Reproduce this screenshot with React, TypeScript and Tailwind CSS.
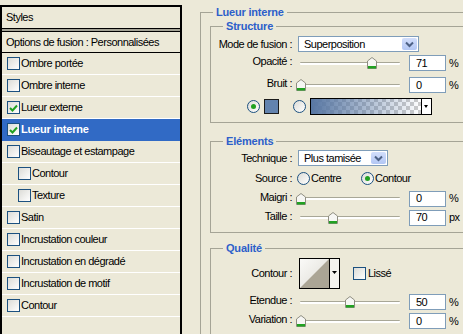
import React from "react";

const Check = () => (
  <svg width="9" height="8" viewBox="0 0 9 8">
    <path d="M1 4 L3.5 6.5 L8 1.5" fill="none" stroke="#21a121" strokeWidth="2" />
  </svg>
);

const Checkbox = ({ checked = false }: { checked?: boolean }) => (
  <span className="flex h-[13px] w-[13px] shrink-0 items-center justify-center border border-[#1c5180] bg-linear-to-br from-[#dcdcd7] to-white">
    {checked && <Check />}
  </span>
);

const Radio = ({ checked = false }: { checked?: boolean }) => (
  <span className="flex h-[13px] w-[13px] shrink-0 items-center justify-center rounded-full border border-[#1c5180] bg-linear-to-br from-[#dcdcd7] to-white">
    {checked && <span className="h-[5px] w-[5px] rounded-full bg-[#21a121]" />}
  </span>
);

const Thumb = () => (
  <svg width="10" height="12" viewBox="0 0 10 12">
    <path d="M0.5 4 L5 0.5 L9.5 4 V11.5 H0.5 Z" fill="#f6f6f3" stroke="#8f8e82" />
    <rect x="1" y="9" width="8" height="2.5" fill="#21a121" />
  </svg>
);

const Slider = ({ pos }: { pos: number }) => (
  <div className="relative ml-[2px] flex h-[14px] w-[100px] items-center">
    <div className="h-[3px] w-full rounded-[1px] border-t border-[#a8a797] bg-white" />
    <div className="absolute top-[1px]" style={{ left: pos - 5 }}>
      <Thumb />
    </div>
  </div>
);

const Field = ({ value, unit }: { value: string; unit: string }) => (
  <>
    <div className="ml-[9px] flex h-[16px] w-[37px] items-center border border-[#7f9db9] bg-white pl-[6px]">
      {value}
    </div>
    <span className="ml-[3px]">{unit}</span>
  </>
);

const Select = ({ value, width }: { value: string; width: string }) => (
  <div className={`flex h-[16px] items-center justify-between border border-[#7f9db9] bg-white pl-[5px] ${width}`}>
    <span>{value}</span>
    <span className="mr-[1px] flex h-[12px] w-[15px] items-center justify-center rounded-[2px] bg-linear-to-b from-[#d2defb] to-[#b3c7f4]">
      <svg width="9" height="7" viewBox="0 0 9 7">
        <path d="M1 1.5 L4.5 5 L8 1.5" fill="none" stroke="#4d6185" strokeWidth="2" />
      </svg>
    </span>
  </div>
);

const Label = ({ children, lift = false }: { children: React.ReactNode; lift?: boolean }) => (
  <span className={`w-[82px] shrink-0 pr-px text-right ${lift ? "pb-[3px]" : ""}`}>{children}</span>
);

const SliderRow = ({ label, pos, value, unit, h }: { label: string; pos: number; value: string; unit: string; h: string }) => (
  <div className={`flex items-center gap-[5px] ${h}`}>
    <Label lift>{label}</Label>
    <div className="flex items-center">
      <Slider pos={pos} />
      <Field value={value} unit={unit} />
    </div>
  </div>
);

const GradientSwatch = () => (
  <svg width="122" height="17" viewBox="0 0 122 17">
    <defs>
      <pattern id="chk" width="8" height="8" patternUnits="userSpaceOnUse">
        <rect width="8" height="8" fill="#ffffff" />
        <rect width="4" height="4" fill="#cccccc" />
        <rect x="4" y="4" width="4" height="4" fill="#cccccc" />
      </pattern>
      <linearGradient id="fade" x1="0" x2="1" y1="0" y2="0">
        <stop offset="0" stopColor="#5877a3" stopOpacity="1" />
        <stop offset="1" stopColor="#5877a3" stopOpacity="0" />
      </linearGradient>
    </defs>
    <rect x="1" y="1" width="110" height="15" fill="url(#chk)" />
    <rect x="1" y="1" width="110" height="15" fill="url(#fade)" />
    <rect x="111" y="1" width="10" height="15" fill="#ffffff" />
    <line x1="111.5" y1="1" x2="111.5" y2="16" stroke="#000" />
    <path d="M114 7 L118 7 L116 10 Z" fill="#000" />
    <rect x="0.5" y="0.5" width="121" height="16" fill="none" stroke="#000" />
  </svg>
);

const ContourPicker = () => (
  <svg width="41" height="31" viewBox="0 0 41 31">
    <defs>
      <linearGradient id="cbg" x1="0" x2="1" y1="0" y2="1">
        <stop offset="0" stopColor="#fafaf8" />
        <stop offset="1" stopColor="#dedcd4" />
      </linearGradient>
    </defs>
    <rect x="1" y="1" width="29" height="29" fill="url(#cbg)" />
    <polygon points="1,30 30,1 30,30" fill="#aba595" />
    <rect x="30" y="1" width="10" height="29" fill="#f4f3ee" />
    <line x1="30.5" y1="1" x2="30.5" y2="30" stroke="#000" />
    <path d="M33 13 L38 13 L35.5 16 Z" fill="#000" />
    <rect x="0.5" y="0.5" width="40" height="30" fill="none" stroke="#000" />
  </svg>
);

const Legend = ({ children }: { children: React.ReactNode }) => (
  <legend className="ml-[12px] px-[3px] text-[11px] leading-[14px] font-bold tracking-[-0.2px] text-[#2d5fca]">{children}</legend>
);

const styles = [
  { label: "Ombre portée" },
  { label: "Ombre interne" },
  { label: "Lueur externe", checked: true },
  { label: "Lueur interne", checked: true, selected: true },
  { label: "Biseautage et estampage" },
  { label: "Contour", indent: true },
  { label: "Texture", indent: true },
  { label: "Satin" },
  { label: "Incrustation couleur" },
  { label: "Incrustation en dégradé" },
  { label: "Incrustation de motif" },
  { label: "Contour" },
];

export default function App() {
  return (
    <div className="flex h-[334px] w-[463px] items-start overflow-hidden bg-[#ece9d8] font-['Liberation_Sans',Arial,sans-serif] text-[11px] leading-[13px] tracking-[-0.5px] text-black">
      {/* left list */}
      <div className="mt-[5px] h-[345px] w-[182px] shrink-0 border-2 border-black">
        <div className="flex h-[21px] items-center pl-[4px]">Styles</div>
        <div className="h-[4px] border-y border-black bg-[#a3a295]" />
        <div className="flex h-[21px] items-center border-b border-black pl-[4px]">Options de fusion : Personnalisées</div>
        {styles.map((s, i) => (
          <div
            key={i}
            className={`flex h-[22px] items-center gap-[1px] border-b ${s.selected ? "border-[#316ac5] bg-[#316ac5] font-bold tracking-[-0.2px] text-white" : "border-white"} ${s.indent ? "pl-[16px]" : "pl-[5px]"}`}
          >
            <Checkbox checked={s.checked} />
            <span>{s.label}</span>
          </div>
        ))}
      </div>

      {/* right settings */}
      <fieldset className="mt-[5px] ml-[18px] h-[340px] w-[300px] shrink-0 border-t border-l border-[#a5a496]">
        <Legend>Lueur interne</Legend>

        <fieldset className="ml-[9px] w-[290px] border-t border-b border-l border-[#a5a496] pb-[6px]">
          <Legend>Structure</Legend>
          <div className="mt-[3px] flex h-[16px] items-center gap-[5px]">
            <Label>Mode de fusion :</Label>
            <Select value="Superposition" width="w-[121px]" />
          </div>
          <SliderRow label="Opacité :" pos={72} value="71" unit="%" h="h-[22px]" />
          <SliderRow label="Bruit :" pos={1} value="0" unit="%" h="h-[22px]" />
          <div className="flex h-[20px] items-center pl-[36px]">
            <Radio checked />
            <span className="ml-[4px] h-[15px] w-[15px] border border-[#1b1b1b] bg-[#6383ae]" />
            <span className="ml-[14px]">
              <Radio />
            </span>
            <span className="ml-[4px] flex">
              <GradientSwatch />
            </span>
          </div>
        </fieldset>

        <fieldset className="mt-[11px] ml-[9px] w-[290px] border-t border-b border-l border-[#a5a496] pb-[5px]">
          <Legend>Eléments</Legend>
          <div className="mt-[2px] flex h-[16px] items-center gap-[5px]">
            <Label>Technique :</Label>
            <Select value="Plus tamisée" width="w-[90px]" />
          </div>
          <div className="mt-[1px] flex h-[22px] items-center gap-[4px]">
            <Label>Source :</Label>
            <div className="flex w-[60px] items-center gap-[1px]">
              <Radio />
              <span>Centre</span>
            </div>
            <div className="flex items-center gap-[1px]">
              <Radio checked />
              <span>Contour</span>
            </div>
          </div>
          <SliderRow label="Maigri :" pos={1} value="0" unit="%" h="h-[19px]" />
          <SliderRow label="Taille :" pos={33} value="70" unit="px" h="h-[19px]" />
        </fieldset>

        <fieldset className="mt-[8px] ml-[9px] h-[120px] w-[290px] border-t border-l border-[#a5a496]">
          <Legend>Qualité</Legend>
          <div className="mt-[3px] flex h-[31px] items-center gap-[6px]">
            <Label>Contour :</Label>
            <span className="flex">
              <ContourPicker />
            </span>
            <div className="ml-[7px] flex items-center gap-[2px]">
              <Checkbox />
              <span>Lissé</span>
            </div>
          </div>
          <SliderRow label="Etendue :" pos={50} value="50" unit="%" h="mt-[3px] h-[20px]" />
          <SliderRow label="Variation :" pos={1} value="0" unit="%" h="h-[18px]" />
        </fieldset>
      </fieldset>
    </div>
  );
}
